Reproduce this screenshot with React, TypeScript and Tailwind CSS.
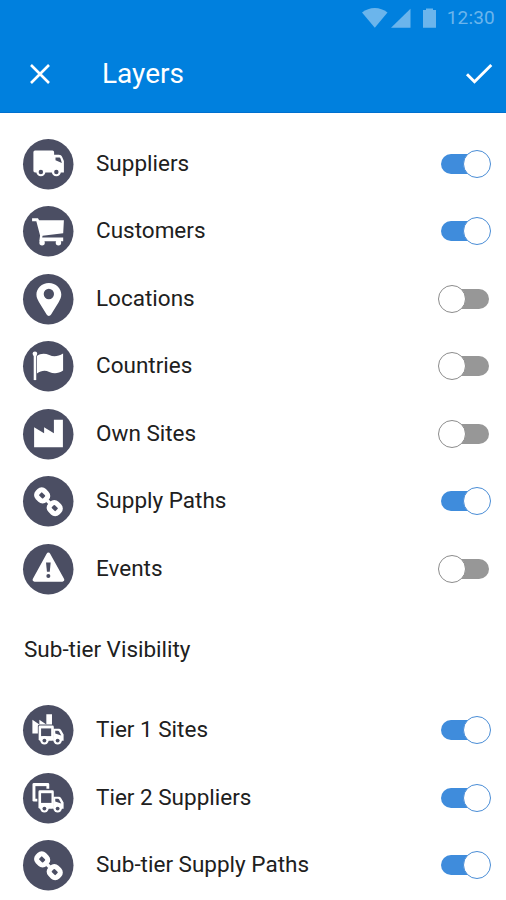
import { useState } from "react";
import type { ReactNode } from "react";

const DARK = "#4b4e63";

type TLayer = {
  id: string;
  label: string;
  icon: ReactNode;
  enabled: boolean;
};

const TruckIcon = () => (
  <>
    <path
      fill="#fff"
      d="M10.300 13a1.600 1.600 0 0 1 1.600-1.600h17.300a1.600 1.600 0 0 1 1.600 1.600v2.600h4.800c1.500 0 2.500.8 3.200 2.300l1.700 4v11.300H12a1.700 1.700 0 0 1-1.700-1.700z"
    />
    <path fill={DARK} d="M32.200 18.300h3.400c.8 0 1.300.5 1.600 1.200l1.300 4.300-6.300-2.700z" />
    <circle cx="17.700" cy="32.400" r="4.500" fill="#fff" />
    <circle cx="33" cy="32.400" r="4.500" fill="#fff" />
    <circle cx="17.700" cy="32.700" r="2.200" fill={DARK} />
    <circle cx="33" cy="32.700" r="2.200" fill={DARK} />
  </>
);

const CartIcon = () => (
  <>
    <path
      fill="#fff"
      d="M9 12.200h5.800l1.200 2h24.500l-.7 12.900-20.400 2.300-.4 1.700h20.800v3.800H16.100l.8-5.800-3.700-14H9z"
    />
    <circle cx="18.900" cy="36.300" r="2.700" fill="#fff" />
    <circle cx="35.100" cy="36.300" r="2.700" fill="#fff" />
  </>
);

const PinIcon = () => (
  <path
    fill="#fff"
    fillRule="evenodd"
    d="M25.600 8.800c-7 0-12.300 5.200-12.300 11.600 0 3 1.200 5.200 2.600 7.500l7.500 12.300c1 1.700 3.400 1.700 4.400 0L35.300 27.900c1.400-2.300 2.600-4.500 2.600-7.500 0-6.400-5.300-11.600-12.300-11.600zm0 5.900a5.100 5.100 0 1 1 0 10.200 5.100 5.100 0 0 1 0-10.200z"
  />
);

const FlagIcon = () => (
  <>
    <circle cx="11.800" cy="12.700" r="2.300" fill="#fff" />
    <path fill="#fff" d="M10.600 13h2.500v25.700h-2.500z" />
    <path
      fill="#fff"
      d="M13.800 14.800c3.200-2.400 7.800-2.800 12.200-.9 4.600 2 8.700 1.400 13.700-1.600v17c-4.600 3.200-9.300 3.500-13.700 1.400-4.200-2-8.100-1.300-12.200 1.500z"
    />
  </>
);

const FactoryIcon = () => (
  <path fill="#fff" d="M11 18l9.900 6v-6l9.700 6V10.600h8.900v27.200H11z" />
);

const ChainIcon = () => (
  <g transform="rotate(45 25.200 25.500)" fill="none" stroke="#fff" strokeWidth="5">
    <rect x="11.200" y="20.900" width="10.400" height="9.200" rx="3.400" />
    <rect x="28.800" y="20.900" width="10.400" height="9.200" rx="3.400" />
    <path d="M23.500 25.500h3.400" strokeWidth="3.600" />
  </g>
);

const AlertIcon = () => (
  <>
    <path
      fill="#fff"
      d="M23.400 9.600c.8-1.500 2.700-1.500 3.500 0l13.700 24.900c.8 1.400-.1 2.800-1.600 2.800H11.400c-1.500 0-2.400-1.400-1.600-2.800z"
    />
    <path fill={DARK} d="M22.800 18.300h4.600l-.9 9.200h-2.800z" />
    <circle cx="25.100" cy="31.600" r="2" fill={DARK} />
  </>
);

// front of the van, the same on both tier icons
const VanCab = () => (
  <>
    <path
      fill="#fff"
      d="M30 23.600h5.200c1.200 0 2 .5 2.600 1.500l2.400 4v6.300H30z"
    />
    <path fill={DARK} d="M31.900 25.600h2.700c.6 0 1 .3 1.300.8l2 3.800-6-2.100z" />
    <circle cx="21.200" cy="34.900" r="4.200" fill="#fff" />
    <circle cx="34.300" cy="34.900" r="4.200" fill="#fff" />
    <circle cx="21.200" cy="35.200" r="1.900" fill={DARK} />
    <circle cx="34.300" cy="35.200" r="1.900" fill={DARK} />
  </>
);

const SiteTruckIcon = () => (
  <>
    <path fill="#fff" d="M9.300 14.700l6.900 4.700v-4.700l6.900 4.700V9.100h5.600v19H9.300z" />
    <rect x="14.700" y="19.200" width="16.500" height="16.300" rx="1.600" fill={DARK} />
    <rect x="15.500" y="20.300" width="15" height="15.100" rx="1.400" fill="#fff" />
    <path fill={DARK} d="M17.900 23.200h10v7.600h-10z" />
    <VanCab />
  </>
);

const StackedTruckIcon = () => (
  <>
    <rect x="9.400" y="10" width="16.600" height="18.200" rx="1.300" fill="#fff" />
    <path fill={DARK} d="M12.300 13h10.900v12.500H12.300z" />
    <rect x="14.200" y="15.700" width="17" height="19" rx="1.600" fill={DARK} />
    <rect x="15.300" y="17.200" width="15.200" height="18.200" rx="1.400" fill="#fff" />
    <path fill={DARK} d="M17.900 20h10.300v9.600H17.900z" />
    <VanCab />
  </>
);

const mainLayers: TLayer[] = [
  { id: "suppliers", label: "Suppliers", icon: <TruckIcon />, enabled: true },
  { id: "customers", label: "Customers", icon: <CartIcon />, enabled: true },
  { id: "locations", label: "Locations", icon: <PinIcon />, enabled: false },
  { id: "countries", label: "Countries", icon: <FlagIcon />, enabled: false },
  { id: "own-sites", label: "Own Sites", icon: <FactoryIcon />, enabled: false },
  { id: "supply-paths", label: "Supply Paths", icon: <ChainIcon />, enabled: true },
  { id: "events", label: "Events", icon: <AlertIcon />, enabled: false },
];

const subTierLayers: TLayer[] = [
  { id: "tier-1", label: "Tier 1 Sites", icon: <SiteTruckIcon />, enabled: true },
  { id: "tier-2", label: "Tier 2 Suppliers", icon: <StackedTruckIcon />, enabled: true },
  { id: "sub-paths", label: "Sub-tier Supply Paths", icon: <ChainIcon />, enabled: true },
];

const Toggle = ({
  label,
  checked,
  onChange,
}: {
  label: string;
  checked: boolean;
  onChange: () => void;
}) => (
  <button
    role="switch"
    aria-checked={checked}
    aria-label={label}
    onClick={onChange}
    className="relative flex h-7 w-[54px] items-center"
  >
    <span
      className={
        checked
          ? "ml-[3px] h-5 w-10 rounded-full bg-[#3f8cdc]"
          : "ml-[11px] h-5 w-10 rounded-full bg-[#979797]"
      }
    />
    <span
      className={
        checked
          ? "absolute top-0 right-px size-7 rounded-full border-[1.5px] border-[#4a8dd6] bg-white"
          : "absolute top-0 left-0 size-7 rounded-full border-[1.5px] border-[#8c8c8c] bg-white"
      }
    />
  </button>
);

const LayerRow = ({
  layer,
  onToggle,
}: {
  layer: TLayer;
  onToggle: (id: string) => void;
}) => (
  <li className="flex h-[67.5px] items-center pr-[14px] pl-[23px]">
    <svg viewBox="0 0 50 50" className="size-[50.5px] shrink-0 overflow-visible">
      <circle cx="25" cy="25" r="25" fill={DARK} />
      {layer.icon}
    </svg>
    <span className="ml-[22.5px] flex-1 pb-[2px] text-[22.5px] leading-7">
      {layer.label}
    </span>
    <Toggle
      label={layer.label}
      checked={layer.enabled}
      onChange={() => onToggle(layer.id)}
    />
  </li>
);

const App = () => {
  const [layers, setLayers] = useState(mainLayers);
  const [subLayers, setSubLayers] = useState(subTierLayers);

  const flip = (list: TLayer[], id: string) =>
    list.map((item) =>
      item.id === id ? { ...item, enabled: !item.enabled } : item,
    );

  return (
    <div className="h-[900px] w-[506px] overflow-hidden bg-white font-[Roboto,sans-serif] text-[#202020]">
      <header className="h-[113px] border-b border-[#0070cf] bg-[#0080de] text-white">
        <div className="flex h-9 items-center justify-end pr-[11px] text-[#6bb5ec]">
          <svg viewBox="0 0 78 22" className="h-[22px] w-[78px]" fill="currentColor">
            <path d="M0 5.500C7.500-.5 18-.5 25.500 5.500L12.800 20.800z" />
            <path d="M48.500 1.800v18.900H29z" />
            <path d="M61 3h3V1.400h7V3h3v17.700H61z" />
          </svg>
          <span className="ml-[7px] text-[19px] leading-6 tracking-[0.2px]">12:30</span>
        </div>
        <div className="flex h-[76px] items-center pr-[13px] pl-[29px]">
          <button aria-label="Close">
            <svg viewBox="0 0 22 22" className="size-[22px]">
              <path d="M2 2l18 18M20 2L2 20" stroke="#fff" strokeWidth="2.600" />
            </svg>
          </button>
          <h1 className="ml-[51px] flex-1 text-[28px] leading-8">Layers</h1>
          <button aria-label="Apply">
            <svg viewBox="0 0 28 22" className="h-[22px] w-7" fill="none">
              <path d="M2 11.200l7.500 7.500L26.300 2" stroke="#fff" strokeWidth="2.900" />
            </svg>
          </button>
        </div>
      </header>

      <ul className="pt-[17px]">
        {layers.map((layer) => (
          <LayerRow
            key={layer.id}
            layer={layer}
            onToggle={(id) => setLayers(flip(layers, id))}
          />
        ))}
      </ul>
      <h2 className="flex h-[94px] items-center pb-px pl-6 text-[22.5px] leading-7">
        Sub-tier Visibility
      </h2>
      <ul>
        {subLayers.map((layer) => (
          <LayerRow
            key={layer.id}
            layer={layer}
            onToggle={(id) => setSubLayers(flip(subLayers, id))}
          />
        ))}
      </ul>
    </div>
  );
};

export default App;
